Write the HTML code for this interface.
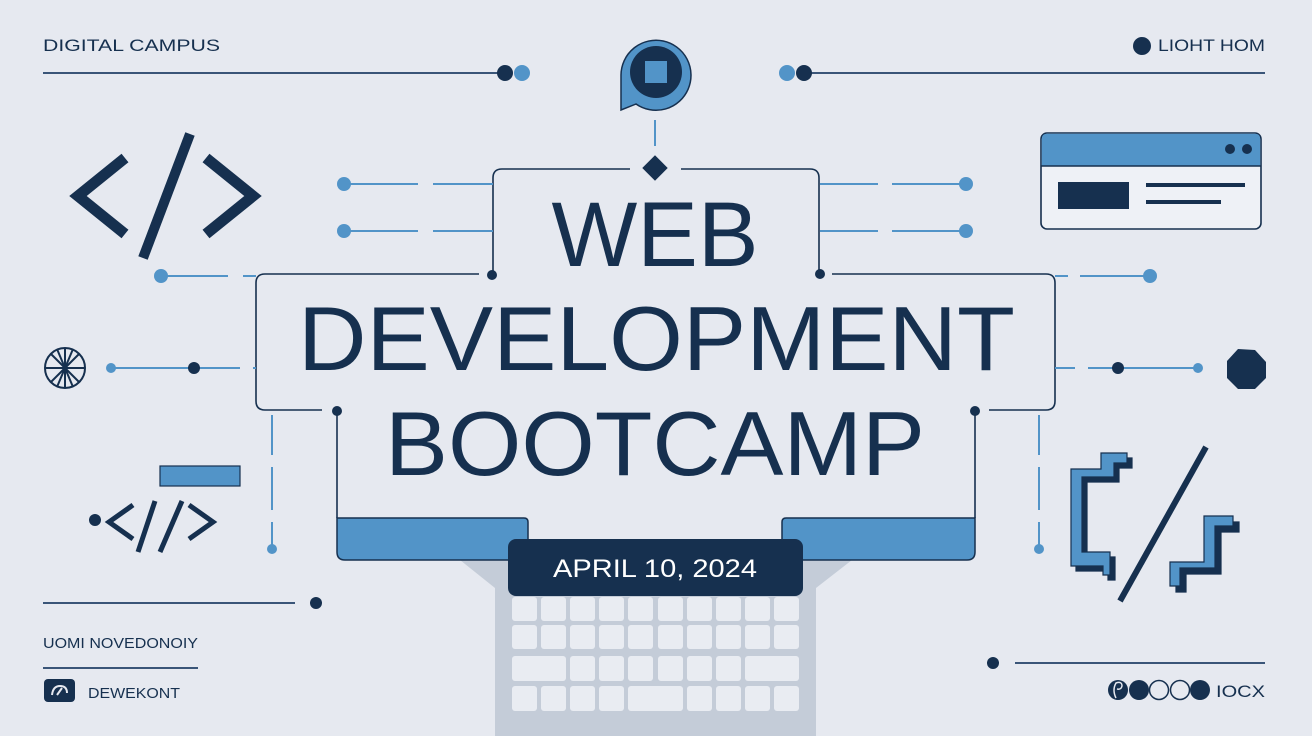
<!DOCTYPE html>
<html><head><meta charset="utf-8"><style>
html,body{margin:0;padding:0;background:#e6e9f0;}
svg{display:block}
text{font-family:"Liberation Sans",sans-serif;}
</style></head><body>
<svg width="1312" height="736" viewBox="0 0 1312 736" xmlns="http://www.w3.org/2000/svg">
<rect width="1312" height="736" fill="#e6e9f0"/>
<g fill="#16304f">
<text x="43" y="51" font-size="17" textLength="177" lengthAdjust="spacingAndGlyphs">DIGITAL CAMPUS</text>
<text x="1158" y="51" font-size="17" textLength="107" lengthAdjust="spacingAndGlyphs">LIOHT HOM</text>
<circle cx="1142" cy="46" r="9"/>
</g>
<line x1="43" y1="73" x2="500" y2="73" stroke="#3a5578" stroke-width="2"/>
<circle cx="522" cy="73" r="8" fill="#5294c8"/><circle cx="505" cy="73" r="8" fill="#16304f"/>
<line x1="810" y1="73" x2="1265" y2="73" stroke="#3a5578" stroke-width="2"/>
<circle cx="787" cy="73" r="8" fill="#5294c8"/><circle cx="804" cy="73" r="8" fill="#16304f"/>
<path d="M621,110 L621,75 A35,35 0 1 1 636,104 Z" fill="#5294c8" stroke="#16304f" stroke-width="1.5"/>
<circle cx="656" cy="72" r="26" fill="#16304f"/>
<rect x="645" y="61" width="22" height="22" fill="#5294c8"/>
<line x1="655" y1="120" x2="655" y2="146" stroke="#5294c8" stroke-width="2"/>
<rect x="646" y="159" width="18" height="18" fill="#16304f" transform="rotate(45 655 168)"/>
<g fill="none" stroke="#16304f" stroke-width="1.6">
<path d="M630,169 H502 Q493,169 493,178 V274"/>
<path d="M681,169 H810 Q819,169 819,178 V274"/>
<path d="M479,274 H265 Q256,274 256,283 V401 Q256,410 265,410 H322"/>
<path d="M832,274 H1046 Q1055,274 1055,283 V401 Q1055,410 1046,410 H989"/>
<path d="M337,411 V518"/><path d="M975,411 V518"/>
</g>
<g fill="#16304f"><circle cx="492" cy="275" r="5"/><circle cx="820" cy="274" r="5"/><circle cx="337" cy="411" r="5"/><circle cx="975" cy="411" r="5"/></g>
<g stroke="#5294c8" stroke-width="2">
<line x1="344" y1="184" x2="418" y2="184"/><line x1="433" y1="184" x2="493" y2="184"/>
<line x1="344" y1="231" x2="418" y2="231"/><line x1="433" y1="231" x2="493" y2="231"/>
<line x1="820" y1="184" x2="878" y2="184"/><line x1="892" y1="184" x2="966" y2="184"/>
<line x1="820" y1="231" x2="878" y2="231"/><line x1="892" y1="231" x2="966" y2="231"/>
<line x1="161" y1="276" x2="228" y2="276"/><line x1="243" y1="276" x2="256" y2="276"/>
<line x1="1055" y1="276" x2="1068" y2="276"/><line x1="1080" y1="276" x2="1150" y2="276"/>
<line x1="111" y1="368" x2="240" y2="368"/><line x1="253" y1="368" x2="256" y2="368"/>
<line x1="1055" y1="368" x2="1075" y2="368"/><line x1="1088" y1="368" x2="1198" y2="368"/>
<line x1="272" y1="415" x2="272" y2="455"/><line x1="272" y1="467" x2="272" y2="510"/><line x1="272" y1="522" x2="272" y2="548"/>
<line x1="1039" y1="415" x2="1039" y2="455"/><line x1="1039" y1="467" x2="1039" y2="510"/><line x1="1039" y1="522" x2="1039" y2="548"/>
</g>
<g fill="#5294c8">
<circle cx="344" cy="184" r="7"/><circle cx="344" cy="231" r="7"/><circle cx="966" cy="184" r="7"/><circle cx="966" cy="231" r="7"/>
<circle cx="161" cy="276" r="7"/><circle cx="1150" cy="276" r="7"/><circle cx="111" cy="368" r="5"/><circle cx="1198" cy="368" r="5"/>
<circle cx="272" cy="549" r="5"/><circle cx="1039" cy="549" r="5"/>
</g>
<g fill="#16304f"><circle cx="194" cy="368" r="6"/><circle cx="1118" cy="368" r="6"/></g>
<path d="M1238,349 L1255,350 L1266,362 L1266,378 L1255,389 L1238,389 L1227,378 L1227,361 Z" fill="#16304f"/>
<g stroke="#16304f" stroke-width="2" fill="none">
<circle cx="65" cy="368" r="20"/>
<line x1="45" y1="368" x2="85" y2="368"/><line x1="65" y1="348" x2="65" y2="388"/>
<line x1="51" y1="354" x2="79" y2="382"/><line x1="79" y1="354" x2="51" y2="382"/>
<line x1="57" y1="349" x2="73" y2="387"/><line x1="73" y1="349" x2="57" y2="387"/>
</g>
<g fill="none" stroke="#16304f" stroke-width="11" stroke-linejoin="miter">
<polyline points="125,158 78,196 125,234"/>
<polyline points="206,158 253,196 206,234"/>
</g>
<line x1="190" y1="134" x2="143" y2="258" stroke="#16304f" stroke-width="10"/>
<rect x="1041" y="133" width="220" height="96" rx="6" fill="#eef1f6" stroke="#16304f" stroke-width="1.6"/>
<path d="M1041.8,166 V139 Q1041.8,133.8 1047,133.8 H1255 Q1260.2,133.8 1260.2,139 V166 Z" fill="#5294c8"/>
<line x1="1041" y1="166" x2="1261" y2="166" stroke="#16304f" stroke-width="1.5"/>
<circle cx="1230" cy="149" r="5" fill="#16304f"/><circle cx="1247" cy="149" r="5" fill="#16304f"/>
<rect x="1058" y="182" width="71" height="27" fill="#16304f"/>
<rect x="1146" y="183" width="99" height="4" fill="#16304f"/>
<rect x="1146" y="200" width="75" height="4" fill="#16304f"/>
<g fill="#16304f">
<text x="655" y="266" font-size="92" text-anchor="middle" textLength="207" lengthAdjust="spacingAndGlyphs">WEB</text>
<text x="298" y="370" font-size="91" textLength="717" lengthAdjust="spacingAndGlyphs">DEVELOPMENT</text>
<text x="385" y="475" font-size="91" textLength="540" lengthAdjust="spacingAndGlyphs">BOOTCAMP</text>
</g>
<path d="M460,560 L495,588 V736 H816 V588 L852,560 Z" fill="#c4ccd8"/>
<g fill="#e9ecf2">
<g id="r1">
<rect x="512" y="597" width="25" height="24" rx="3"/><rect x="541" y="597" width="25" height="24" rx="3"/><rect x="570" y="597" width="25" height="24" rx="3"/><rect x="599" y="597" width="25" height="24" rx="3"/><rect x="628" y="597" width="25" height="24" rx="3"/><rect x="658" y="597" width="25" height="24" rx="3"/><rect x="687" y="597" width="25" height="24" rx="3"/><rect x="716" y="597" width="25" height="24" rx="3"/><rect x="745" y="597" width="25" height="24" rx="3"/><rect x="774" y="597" width="25" height="24" rx="3"/>
</g>
<use href="#r1" y="28"/>
<rect x="512" y="656" width="54" height="25" rx="3"/><rect x="570" y="656" width="25" height="25" rx="3"/><rect x="599" y="656" width="25" height="25" rx="3"/><rect x="628" y="656" width="25" height="25" rx="3"/><rect x="658" y="656" width="25" height="25" rx="3"/><rect x="687" y="656" width="25" height="25" rx="3"/><rect x="716" y="656" width="25" height="25" rx="3"/><rect x="745" y="656" width="54" height="25" rx="3"/>
<rect x="512" y="686" width="25" height="25" rx="3"/><rect x="541" y="686" width="25" height="25" rx="3"/><rect x="570" y="686" width="25" height="25" rx="3"/><rect x="599" y="686" width="25" height="25" rx="3"/><rect x="628" y="686" width="55" height="25" rx="3"/><rect x="687" y="686" width="25" height="25" rx="3"/><rect x="716" y="686" width="25" height="25" rx="3"/><rect x="745" y="686" width="25" height="25" rx="3"/><rect x="774" y="686" width="25" height="25" rx="3"/>
</g>
<path d="M337,518 H524 Q528,518 528,522 V560 H345 Q337,560 337,552 Z" fill="#5294c8" stroke="#16304f" stroke-width="1.5"/>
<path d="M786,518 H975 V552 Q975,560 967,560 H782 V522 Q782,518 786,518 Z" fill="#5294c8" stroke="#16304f" stroke-width="1.5"/>
<rect x="508" y="539" width="295" height="57" rx="8" fill="#16304f"/>
<text x="655" y="577" font-size="25" fill="#ffffff" text-anchor="middle" textLength="204" lengthAdjust="spacingAndGlyphs">APRIL 10, 2024</text>
<rect x="160" y="466" width="80" height="20" fill="#5294c8" stroke="#16304f" stroke-width="1.2"/>
<circle cx="95" cy="520" r="6" fill="#16304f"/>
<g fill="none" stroke="#16304f" stroke-width="5">
<polyline points="133,505 109,522 133,539"/>
<polyline points="189,505 213,522 189,539"/>
<line x1="155" y1="501" x2="138" y2="552"/><line x1="182" y1="501" x2="160" y2="552"/>
</g>
<g stroke="#16304f" stroke-width="1.2" stroke-linejoin="miter">
<path d="M1076,474 H1106 V458 H1132 V468 H1119 V482 H1087 V557 H1115 V580 H1108 V571 H1076 Z" fill="#16304f"/>
<path d="M1071,469 H1101 V453 H1127 V463 H1114 V477 H1082 V552 H1110 V575 H1103 V566 H1071 Z" fill="#5294c8"/>
<path d="M1210,522 H1239 V532 H1221 V574 H1186 V592 H1176 V568 H1210 Z" fill="#16304f"/>
<path d="M1204,516 H1233 V526 H1215 V568 H1180 V586 H1170 V562 H1204 Z" fill="#5294c8"/>
</g>
<line x1="1206" y1="447" x2="1120" y2="601" stroke="#16304f" stroke-width="6"/>
<line x1="43" y1="603" x2="295" y2="603" stroke="#3a5578" stroke-width="2"/>
<circle cx="316" cy="603" r="6" fill="#16304f"/>
<text x="43" y="648" font-size="15" fill="#16304f" textLength="155" lengthAdjust="spacingAndGlyphs">UOMI NOVEDONOIY</text>
<line x1="43" y1="668" x2="198" y2="668" stroke="#3a5578" stroke-width="2"/>
<rect x="44" y="679" width="31" height="23" rx="4" fill="#16304f"/>
<path d="M52,695 Q53,686 60,686 Q67,686 67,693 M57,695 L62,688" stroke="#e6e9f0" stroke-width="2" fill="none"/>
<text x="88" y="698" font-size="15" fill="#16304f" textLength="92" lengthAdjust="spacingAndGlyphs">DEWEKONT</text>
<circle cx="993" cy="663" r="6" fill="#16304f"/>
<line x1="1015" y1="663" x2="1265" y2="663" stroke="#3a5578" stroke-width="2"/>
<circle cx="1118" cy="690" r="10" fill="#16304f"/>
<path d="M1116,698 Q1112,690 1116,683 Q1122,681 1122,686 Q1121,690 1117,689" stroke="#e6e9f0" stroke-width="1.5" fill="none"/>
<circle cx="1139" cy="690" r="10" fill="#16304f"/>
<circle cx="1159" cy="690" r="9.5" fill="#e6e9f0" stroke="#16304f" stroke-width="1.5"/>
<circle cx="1180" cy="690" r="9.5" fill="#e6e9f0" stroke="#16304f" stroke-width="1.5"/>
<circle cx="1200" cy="690" r="10" fill="#16304f"/>
<text x="1216" y="697" font-size="17" fill="#16304f" textLength="49" lengthAdjust="spacingAndGlyphs">IOCX</text>
</svg>
</body></html>
